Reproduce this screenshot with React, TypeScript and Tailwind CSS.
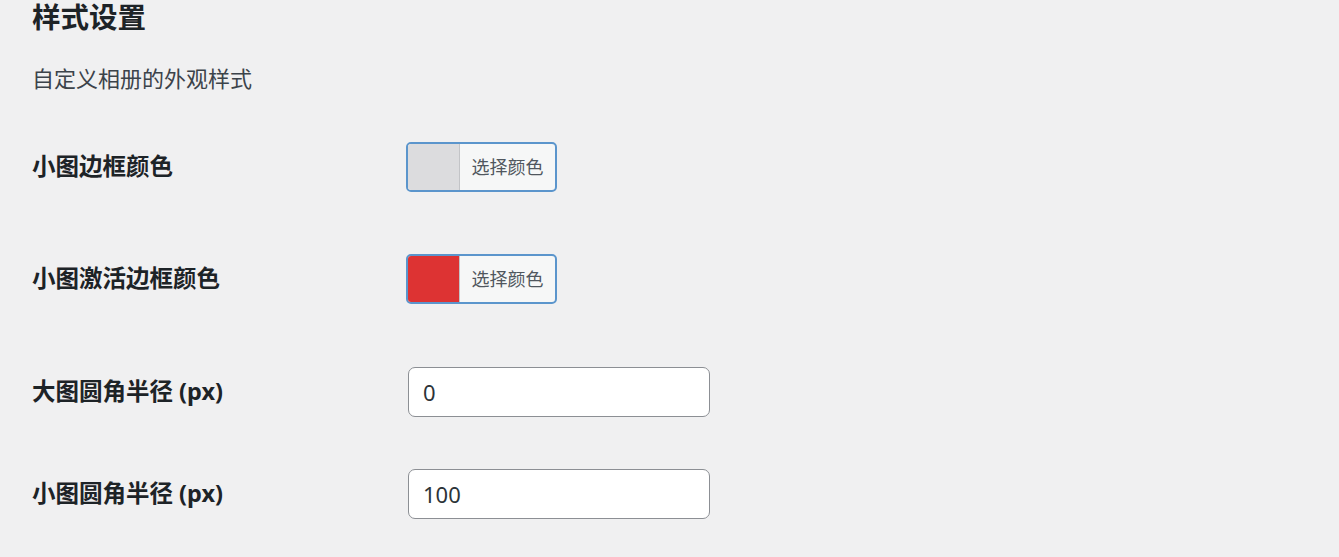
const font = '[font-family:"Noto_Sans","Noto_Sans_CJK_SC",sans-serif]'

function ColorRow({ label, color }: { label: string; color: string }) {
  return (
    <div className="flex items-center h-[50px]">
      <div className="w-[374px] text-[23.5px] font-bold text-[#1d2327]">{label}</div>
      <button
        type="button"
        className="flex h-[50px] w-[151px] overflow-hidden rounded-[5px] border-2 border-[#5b95cc] bg-[#f6f7f7]"
      >
        <span className="h-full w-[52px] border-r border-[#c3c4c7]" style={{ backgroundColor: color }} />
        <span className="flex-1 self-center text-center text-[18px] text-[#50575e]">选择颜色</span>
      </button>
    </div>
  )
}

function NumberRow({ label, value }: { label: string; value: string }) {
  return (
    <div className="flex items-center h-[50px]">
      <div className="w-[376px] text-[23.5px] font-bold text-[#1d2327]">{label}</div>
      <input
        type="text"
        defaultValue={value}
        className="h-[50px] w-[302px] rounded-[7px] border-[1.5px] border-[#8c8f94] bg-white px-[14px] text-[22px] text-[#2c3338] outline-none"
      />
    </div>
  )
}

export default function App() {
  return (
    <div className={`min-h-[557px] bg-[#f0f0f1] pl-[32px] ${font}`}>
      <h2 className="h-[35px] text-[28.5px] font-bold leading-[35px] text-[#1d2327]">样式设置</h2>
      <p className="mt-[28px] h-[30px] text-[22px] leading-[30px] text-[#3c434a]">自定义相册的外观样式</p>

      <div className="mt-[49px] flex flex-col">
        <ColorRow label="小图边框颜色" color="#dcdcde" />
        <div className="mt-[62px]">
          <ColorRow label="小图激活边框颜色" color="#dd3333" />
        </div>
        <div className="mt-[63px]">
          <NumberRow label="大图圆角半径 (px)" value="0" />
        </div>
        <div className="mt-[52px]">
          <NumberRow label="小图圆角半径 (px)" value="100" />
        </div>
      </div>
    </div>
  )
}
